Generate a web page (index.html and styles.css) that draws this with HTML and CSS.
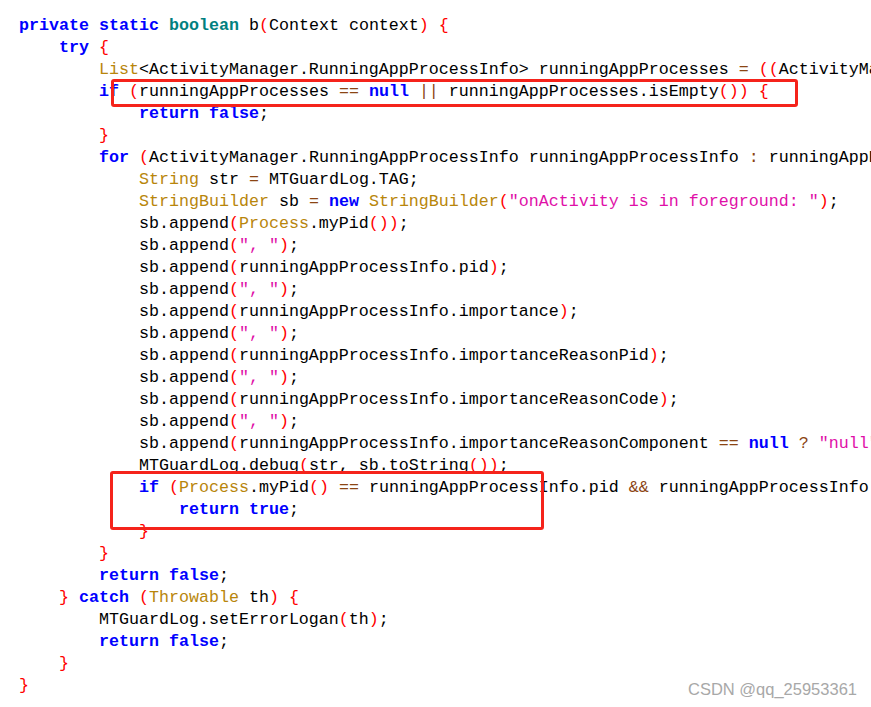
FILE: index.html
```html
<!DOCTYPE html>
<html lang="en">
<head>
    <meta charset="UTF-8">
    <meta name="viewport" content="width=device-width, initial-scale=1.0">
    <title>code</title>
    <link rel="stylesheet" href="styles.css">
</head>
<body>
    <div class="container">
<pre class="code"><span class="kw">private</span> <span class="kw">static</span> <span class="bt">boolean</span> b<span class="br">(</span>Context context<span class="br">)</span> <span class="br">{</span>
    <span class="kw">try</span> <span class="br">{</span>
        <span class="ty">List</span>&lt;ActivityManager.RunningAppProcessInfo&gt; runningAppProcesses <span class="op">=</span> <span class="br">((</span>ActivityManager<span class="br">)</span> context.getSystemService<span class="br">(</span><span class="st">"activity"</span><span class="br">))</span>.getRunningAppProcesses<span class="br">()</span>;
        <span class="kw">if</span> <span class="br">(</span>runningAppProcesses <span class="op">==</span> <span class="kw">null</span> <span class="op">||</span> runningAppProcesses.isEmpty<span class="br">())</span> <span class="br">{</span>
            <span class="kw">return</span> <span class="kw">false</span>;
        <span class="br">}</span>
        <span class="kw">for</span> <span class="br">(</span>ActivityManager.RunningAppProcessInfo runningAppProcessInfo <span class="op">:</span> runningAppProcesses<span class="br">)</span> <span class="br">{</span>
            <span class="ty">String</span> str <span class="op">=</span> MTGuardLog.TAG;
            <span class="ty">StringBuilder</span> sb <span class="op">=</span> <span class="kw">new</span> <span class="ty">StringBuilder</span><span class="br">(</span><span class="st">"onActivity is in foreground: "</span><span class="br">)</span>;
            sb.append<span class="br">(</span><span class="ty">Process</span>.myPid<span class="br">())</span>;
            sb.append<span class="br">(</span><span class="st">", "</span><span class="br">)</span>;
            sb.append<span class="br">(</span>runningAppProcessInfo.pid<span class="br">)</span>;
            sb.append<span class="br">(</span><span class="st">", "</span><span class="br">)</span>;
            sb.append<span class="br">(</span>runningAppProcessInfo.importance<span class="br">)</span>;
            sb.append<span class="br">(</span><span class="st">", "</span><span class="br">)</span>;
            sb.append<span class="br">(</span>runningAppProcessInfo.importanceReasonPid<span class="br">)</span>;
            sb.append<span class="br">(</span><span class="st">", "</span><span class="br">)</span>;
            sb.append<span class="br">(</span>runningAppProcessInfo.importanceReasonCode<span class="br">)</span>;
            sb.append<span class="br">(</span><span class="st">", "</span><span class="br">)</span>;
            sb.append<span class="br">(</span>runningAppProcessInfo.importanceReasonComponent <span class="op">==</span> <span class="kw">null</span> <span class="op">?</span> <span class="st">"null"</span> <span class="op">:</span> runningAppProcessInfo.importanceReasonComponent.toString<span class="br">())</span>;
            MTGuardLog.debug<span class="br">(</span>str, sb.toString<span class="br">())</span>;
            <span class="kw">if</span> <span class="br">(</span><span class="ty">Process</span>.myPid<span class="br">()</span> <span class="op">==</span> runningAppProcessInfo.pid <span class="op">&amp;&amp;</span> runningAppProcessInfo.importance <span class="op">==</span> 100<span class="br">)</span> <span class="br">{</span>
                <span class="kw">return</span> <span class="kw">true</span>;
            <span class="br">}</span>
        <span class="br">}</span>
        <span class="kw">return</span> <span class="kw">false</span>;
    <span class="br">}</span> <span class="kw">catch</span> <span class="br">(</span><span class="ty">Throwable</span> th<span class="br">)</span> <span class="br">{</span>
        MTGuardLog.setErrorLogan<span class="br">(</span>th<span class="br">)</span>;
        <span class="kw">return</span> <span class="kw">false</span>;
    <span class="br">}</span>
<span class="br">}</span></pre>
        <div class="mark mark1"></div>
        <div class="mark mark2"></div>
        <div class="watermark">CSDN @qq_25953361</div>
    </div>
</body>
</html>
```

FILE: styles.css
```css
html,
body {
    margin: 0;
    background-color: #fff;
}

.container {
    position: relative;
    width: 871px;
    height: 707px;
    overflow: hidden;
}

.code {
    margin: 0;
    padding: 15px 0 0 19px;
    font-family: "Liberation Mono", monospace;
    font-size: 16.67px;
    line-height: 22px;
    color: #000;
    white-space: pre;
}

.kw {
    color: #0000ff;
    font-weight: bold;
}

.bt {
    color: #008080;
    font-weight: bold;
}

.ty {
    color: #b8860b;
}

.br {
    color: #ff0000;
}

.op {
    color: #8b4513;
}

.st {
    color: #e010a8;
}

/* red boxes drawn over the code */
.mark {
    position: absolute;
    border: 3px solid #f5231b;
    border-radius: 3px;
    box-sizing: border-box;
}

.mark1 {
    left: 111px;
    top: 79px;
    width: 687px;
    height: 28px;
}

.mark2 {
    left: 110px;
    top: 471px;
    width: 434px;
    height: 59px;
}

.watermark {
    position: absolute;
    right: 14px;
    bottom: 8px;
    font-family: "Liberation Sans", Arial, sans-serif;
    font-size: 16.5px;
    color: #a8a8a8;
    text-shadow: 0 0 1px #fff;
}
```
